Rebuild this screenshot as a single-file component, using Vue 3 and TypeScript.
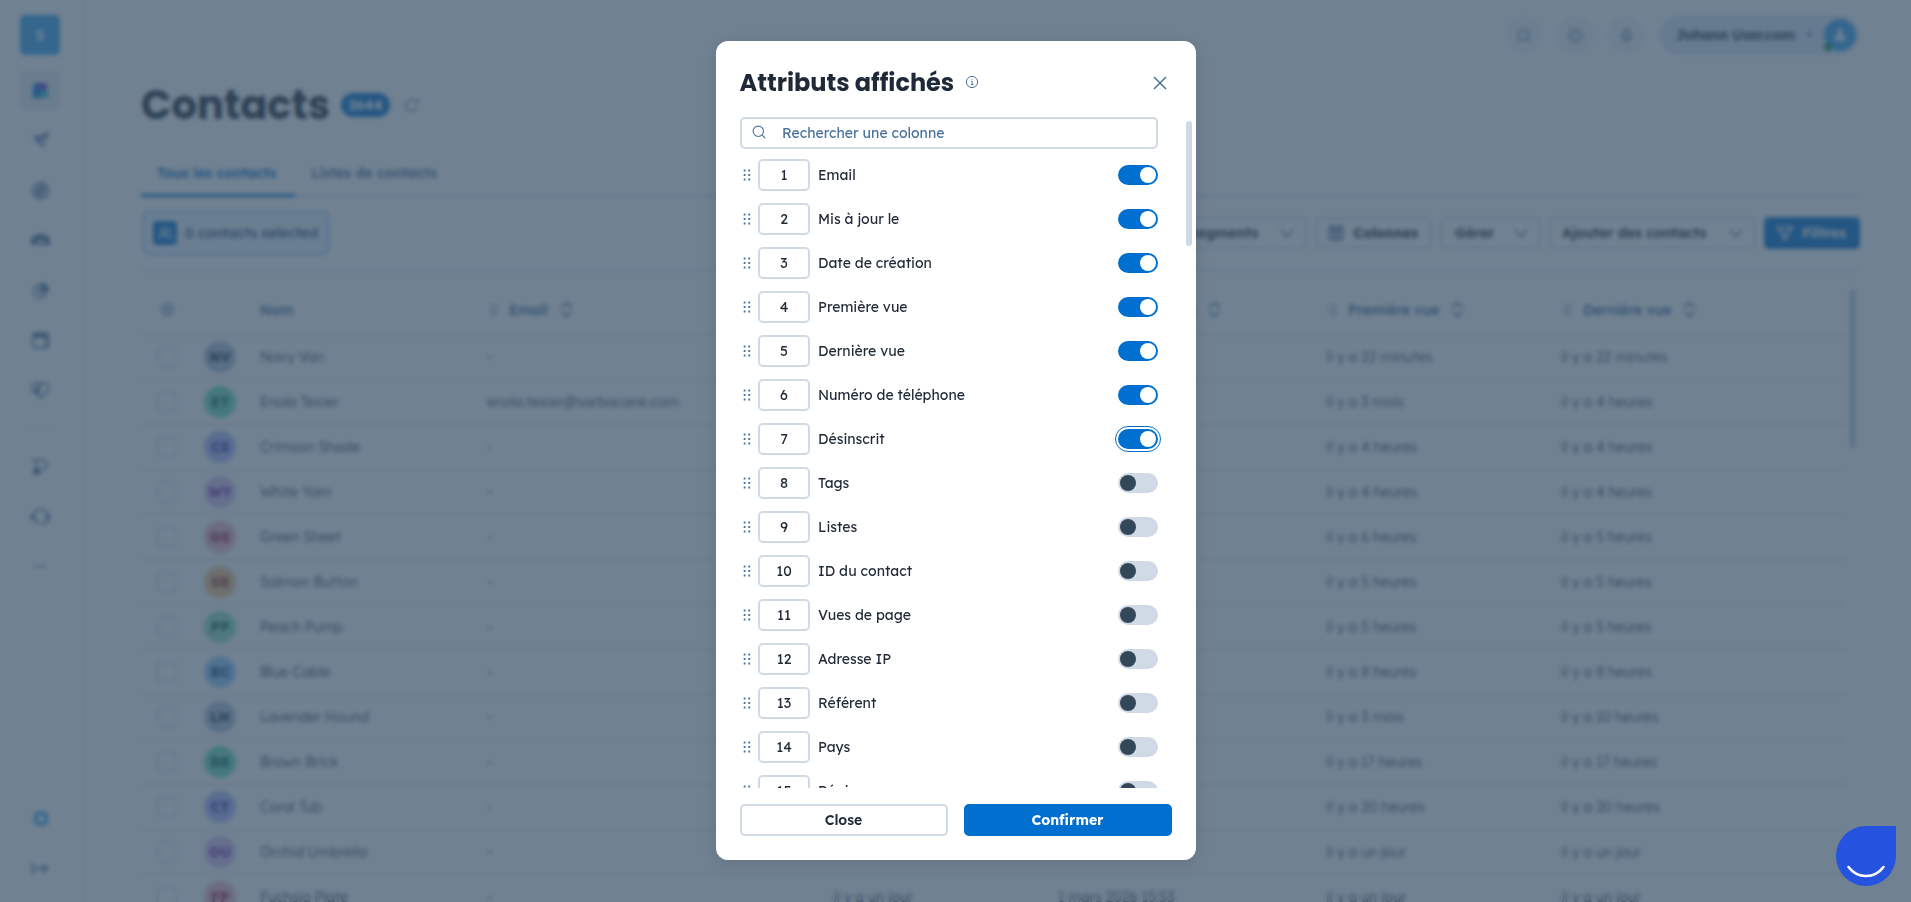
<template>
  <div class="app">
    <aside class="sidebar">
      <div class="workspace">S</div>
      <nav class="nav">
        <a
          v-for="item in mainNav"
          :key="item"
          class="nav-item"
          :class="{ active: item === 'contacts' }"
        >
          <svg
            viewBox="0 0 20 20"
            v-html="icons[item]"
          />
        </a>
      </nav>
      <hr class="nav-divider">
      <nav class="nav">
        <a
          v-for="item in secondaryNav"
          :key="item"
          class="nav-item"
        >
          <svg
            viewBox="0 0 20 20"
            v-html="icons[item]"
          />
        </a>
      </nav>
      <nav class="nav nav-bottom">
        <a
          v-for="item in bottomNav"
          :key="item"
          class="nav-item"
        >
          <svg
            viewBox="0 0 20 20"
            v-html="icons[item]"
          />
        </a>
      </nav>
    </aside>

    <main class="page">
      <header class="topbar">
        <span
          v-for="item in topbarIcons"
          :key="item"
          class="round-button"
        >
          <svg
            viewBox="0 0 20 20"
            v-html="icons[item]"
          />
        </span>
        <div class="account">
          <span class="account-name">Johann User.com</span>
          <span class="account-caret" />
          <span class="account-avatar">
            <svg viewBox="0 0 20 20">
              <circle
                cx="10"
                cy="6"
                r="3.5"
              />
              <path d="M3 17c0-5 3-7 7-7s7 2 7 7z" />
            </svg>
            <i class="online" />
          </span>
        </div>
      </header>

      <div class="page-title">
        <h1>Contacts</h1>
        <span class="count">2644</span>
        <svg
          class="refresh"
          viewBox="0 0 20 20"
          v-html="icons.refresh"
        />
      </div>

      <div class="tabs">
        <span class="tab selected">Tous les contacts</span>
        <span class="tab">Listes de contacts</span>
      </div>

      <div class="toolbar">
        <div class="selection">
          <span class="selection-icon">
            <svg
              viewBox="0 0 20 20"
              v-html="icons.people"
            />
          </span>
          0 contacts selected
        </div>
        <div class="actions">
          <button class="action segments">
            Segments
            <svg
              viewBox="0 0 20 20"
              v-html="icons.chevron"
            />
          </button>
          <button class="action columns">
            <svg
              viewBox="0 0 20 20"
              v-html="icons.columns"
            />
            Colonnes
          </button>
          <button class="action manage">
            Gérer
            <svg
              viewBox="0 0 20 20"
              v-html="icons.chevron"
            />
          </button>
          <button class="action add">
            Ajouter des contacts
            <svg
              viewBox="0 0 20 20"
              v-html="icons.chevron"
            />
          </button>
          <button class="action filters">
            <svg
              viewBox="0 0 20 20"
              v-html="icons.filter"
            />
            Filtres
          </button>
        </div>
      </div>

      <div class="table-area">
        <div class="table">
          <div class="table-row table-head">
            <span class="cell-check">
              <svg
                class="gear"
                viewBox="0 0 20 20"
                v-html="icons.gear"
              />
            </span>
            <span />
            <span>Nom</span>
            <span
              v-for="column in tableColumns"
              :key="column"
              class="column-head"
            >
              <svg
                class="drag"
                viewBox="0 0 8 12"
                v-html="icons.drag"
              />
              {{ column }}
              <svg
                class="sort"
                viewBox="0 0 14 18"
                v-html="icons.sort"
              />
            </span>
          </div>
          <div
            v-for="contact in contacts"
            :key="contact.name"
            class="table-row"
          >
            <span class="cell-check"><i class="checkbox" /></span>
            <span
              class="avatar"
              :class="contact.tone"
            >{{ contact.initials }}</span>
            <span>{{ contact.name }}</span>
            <span>{{ contact.email }}</span>
            <span>{{ contact.updated }}</span>
            <span>{{ contact.created }}</span>
            <span>{{ contact.first }}</span>
            <span>{{ contact.last }}</span>
          </div>
        </div>
        <div class="table-scrollbar" />
      </div>
    </main>
  </div>

  <div class="overlay">
    <section class="modal">
      <header class="modal-header">
        <h2>Attributs affichés</h2>
        <svg
          class="info"
          viewBox="0 0 14 14"
        >
          <circle
            cx="7"
            cy="7"
            r="5.6"
          />
          <path d="M6.3 6.4H7.2V9.6M6 9.6h2.4M6.9 4.2v.9" />
        </svg>
        <svg
          class="close"
          viewBox="0 0 14 14"
        >
          <path d="M1 1l12 12M13 1L1 13" />
        </svg>
      </header>

      <div class="modal-body">
        <div class="modal-content">
          <label class="search">
            <svg viewBox="0 0 14 14">
              <circle
                cx="6.3"
                cy="6.3"
                r="5.2"
              />
              <path d="M10.2 10.2L13 13" />
            </svg>
            <span>Rechercher une colonne</span>
          </label>
          <ul class="attributes">
            <li
              v-for="(attribute, index) in attributes"
              :key="attribute.label"
              class="attribute"
            >
              <svg
                class="handle"
                viewBox="0 0 8 12"
                v-html="icons.drag"
              />
              <span class="position">{{ index + 1 }}</span>
              <span class="label">{{ attribute.label }}</span>
              <button
                class="toggle"
                :class="{ on: attribute.visible, focused: attribute.label === focused }"
                @click="toggle(attribute)"
              />
            </li>
          </ul>
        </div>
        <div class="modal-scrollbar" />
      </div>

      <footer class="modal-footer">
        <button class="secondary">Close</button>
        <button class="primary">Confirmer</button>
      </footer>
    </section>
  </div>

  <div class="messenger">
    <svg viewBox="0 0 60 60">
      <path d="M12.5 41c4.500 6 10.500 9 17.500 9s13-3 17.500-9" />
    </svg>
  </div>
</template>

<script setup lang="ts">
import { ref } from 'vue'

interface Attribute {
  label: string
  visible: boolean
}

const mainNav = ['contacts', 'send', 'target', 'inbox', 'chart', 'calendar', 'heart']
const secondaryNav = ['flow', 'support', 'more']
const bottomNav = ['badge', 'expand']
const topbarIcons = ['search', 'help', 'bell']

const icons: Record<string, string> = {
  contacts: '<path fill="#0a7fe0" stroke="none" d="M2 5l3-3h4v7h3v9H2z"/><path fill="#5b45d6" stroke="none" d="M6 2h8q3 0 3 4v4H9q0-5-3-8z"/><path fill="#2fc8d2" stroke="none" d="M10 11l8-2v9h-8z"/>',
  send: '<path d="M2 5l5 2 11-5-6 14-4-6z"/><path d="M8 10l9-8M5 6l4 7" stroke-width="2.500"/>',
  target: '<circle cx="10" cy="10" r="8.500"/><path d="M4 11l8-8M5 15L15 5M8 17l8-8" stroke-width="2.500"/>',
  inbox: '<path d="M1 8q9-8 18 0v6h-4V9H5v5H1z" fill="currentColor"/><path d="M5 14h10M10 8v6"/>',
  chart: '<path d="M8 4a7 7 0 1 0 8 9H8z"/><path d="M11 2v8h7a8 8 0 0 0-7-8z" fill="currentColor"/>',
  calendar: '<rect x="2" y="2.500" width="16" height="15" rx="2"/><path d="M2 5h16" stroke-width="4"/><path d="M16 7v10"/>',
  heart: '<path d="M10 18L2 10C-1 5 5-1 10 4c5-5 11 1 8 6z"/><path d="M4 10l5-5v5l-3 3z" fill="currentColor"/>',
  flow: '<path d="M2 3h10a5 5 0 0 1 0 10h-2M2 3l4 5v4"/><circle cx="6" cy="15" r="3" fill="currentColor"/>',
  support: '<path d="M3 11V9a7 7 0 0 1 14 0v4q0 5-6 5M4 13q2 4 6 3"/><path d="M2 7.500v6M18 7.500v6" stroke-width="4"/>',
  more: '<path d="M4 10h12" stroke-width="2" stroke-dasharray="2.500 2"/>',
  badge: '<rect x="5" y="4.500" width="11" height="11" rx="3" stroke="#37a6f6" stroke-width="4"/>',
  expand: '<path d="M2 4v12M5 10h12M13 6l4 4-4 4" stroke-width="2"/>',
  search: '<circle cx="9" cy="9" r="7"/><path d="M14 14l4 4"/>',
  help: '<circle cx="10" cy="10" r="8"/><path d="M10 5v6M10 13v2"/>',
  bell: '<path d="M5 14V9a5 5 0 0 1 10 0v5zM8 17h4M10 2v2" stroke-width="2"/>',
  refresh: '<path d="M17 11a7.500 7.500 0 1 1-3-7h4V1M18 4v4"/>',
  people: '<circle cx="8" cy="7" r="3.500"/><path d="M2 17q0-5 6-5t6 5M13 4q4 1 2 6M15 12q4 1 4 5"/>',
  chevron: '<path d="M3 6l7 8 7-8"/>',
  columns: '<path d="M3 3h14v14H3zM8 3v14M12 3v14M3 8h14" stroke-width="2"/>',
  filter: '<path d="M2 4h16l-6 7v5l-4 1v-6z" stroke-width="2"/>',
  gear: '<circle cx="10" cy="10" r="7.500"/><circle cx="10" cy="10" r="2.500"/>',
  drag: [1.5, 6, 10.5].map(y => `<path d="M.7 ${y}h1.800M5.300 ${y}h1.800" stroke-width="1.800"/>`).join(''),
  sort: '<path d="M1.500 7L7 1.500 12.500 7M1.500 11L7 16.500 12.500 11"/>',
}

const tableColumns = ['Email', 'Mis à jour le', 'Date de création', 'Première vue', 'Dernière vue']

const contacts = [
  { initials: 'NV', name: 'Navy Van', email: '-', tone: 'slate', updated: '', created: '', first: 'il y a 22 minutes', last: 'il y a 22 minutes' },
  { initials: 'ET', name: 'Enola Texier', email: 'enola.texier@sarbacane.com', tone: 'teal', updated: '', created: '', first: 'il y a 3 mois', last: 'il y a 4 heures' },
  { initials: 'CS', name: 'Crimson Shade', email: '-', tone: 'indigo', updated: '', created: '', first: 'il y a 4 heures', last: 'il y a 4 heures' },
  { initials: 'WY', name: 'White Yam', email: '-', tone: 'violet', updated: '', created: '', first: 'il y a 4 heures', last: 'il y a 4 heures' },
  { initials: 'GS', name: 'Green Sheet', email: '-', tone: 'rose', updated: '', created: '', first: 'il y a 6 heures', last: 'il y a 5 heures' },
  { initials: 'SB', name: 'Salmon Button', email: '-', tone: 'orange', updated: '', created: '', first: 'il y a 5 heures', last: 'il y a 5 heures' },
  { initials: 'PP', name: 'Peach Pump', email: '-', tone: 'green', updated: '', created: '', first: 'il y a 5 heures', last: 'il y a 5 heures' },
  { initials: 'BC', name: 'Blue Cable', email: '-', tone: 'blue', updated: '', created: '', first: 'il y a 8 heures', last: 'il y a 8 heures' },
  { initials: 'LH', name: 'Lavender Hound', email: '-', tone: 'slate', updated: '', created: '', first: 'il y a 3 mois', last: 'il y a 10 heures' },
  { initials: 'BB', name: 'Brown Brick', email: '-', tone: 'teal', updated: '', created: '', first: 'il y a 17 heures', last: 'il y a 17 heures' },
  { initials: 'CT', name: 'Coral Tub', email: '-', tone: 'indigo', updated: '', created: '', first: 'il y a 20 heures', last: 'il y a 20 heures' },
  { initials: 'OU', name: 'Orchid Umbrella', email: '-', tone: 'violet', updated: '', created: '', first: 'il y a un jour', last: 'il y a un jour' },
  { initials: 'FP', name: 'Fuchsia Plate', email: '-', tone: 'rose', updated: 'il y a un jour', created: '1 mars 2026 15:53', first: 'il y a un jour', last: 'il y a un jour' },
]

const attributes = ref<Attribute[]>([
  { label: 'Email', visible: true },
  { label: 'Mis à jour le', visible: true },
  { label: 'Date de création', visible: true },
  { label: 'Première vue', visible: true },
  { label: 'Dernière vue', visible: true },
  { label: 'Numéro de téléphone', visible: true },
  { label: 'Désinscrit', visible: true },
  { label: 'Tags', visible: false },
  { label: 'Listes', visible: false },
  { label: 'ID du contact', visible: false },
  { label: 'Vues de page', visible: false },
  { label: 'Adresse IP', visible: false },
  { label: 'Référent', visible: false },
  { label: 'Pays', visible: false },
  { label: 'Région', visible: false },
])

// Last toggle used, keeps its focus ring
const focused = ref('Désinscrit')

function toggle(attribute: Attribute) {
  attribute.visible = !attribute.visible
  focused.value = attribute.label
}
</script>

<style>
body {
  overflow: hidden;
  background: #fff;
}
</style>

<style scoped>
.app,
.overlay {
  font-family: Lexend, Inter, sans-serif;
  font-size: 14px;
  color: #1f2937;
}

* {
  box-sizing: border-box;
}

svg {
  flex: none;
  fill: none;
  stroke: currentColor;
  stroke-width: 1.6;
}

button {
  font: inherit;
  color: inherit;
  cursor: pointer;
}

.app {
  display: flex;
  height: 100vh;
  overflow: hidden;
}

.sidebar {
  width: 84px;
  flex: none;
  display: flex;
  flex-direction: column;
  align-items: center;
  padding: 15px 3px 14px 0;
  border-right: 1px solid #dfe6ee;
}

.workspace {
  width: 40px;
  height: 40px;
  margin-bottom: 15px;
  border-radius: 5px;
  background: #37a6f6;
  color: #fff;
  font-weight: 600;
  line-height: 40px;
  text-align: center;
}

.nav {
  display: flex;
  flex-direction: column;
  gap: 10px;
}

.nav-item {
  width: 40px;
  height: 40px;
  display: flex;
  align-items: center;
  justify-content: center;
  border-radius: 5px;
  color: #4d6f9c;
}

.nav-item.active {
  background: #eaf0f7;
}

.nav-item svg {
  width: 19px;
  height: 19px;
}

.nav-divider {
  width: 38px;
  margin: 19px 0 16px;
  border: 0;
  border-top: 1px solid #dfe6ee;
}

.nav-bottom {
  margin-top: auto;
}

.page {
  flex: 1;
  min-width: 0;
  padding: 15px 51px 0 57px;
  overflow: hidden;
}

.topbar {
  height: 40px;
  display: flex;
  justify-content: flex-end;
  align-items: center;
  gap: 13px;
  padding-right: 1px;
}

.round-button {
  width: 38px;
  height: 38px;
  display: flex;
  align-items: center;
  justify-content: center;
  border-radius: 50%;
  background: #f1f5fa;
  color: #4d6f9c;
}

.round-button svg {
  width: 15px;
  height: 15px;
}

.account {
  width: 199px;
  height: 40px;
  display: flex;
  align-items: center;
  margin-left: 2px;
  padding: 0 3px 0 16px;
  border-radius: 20px;
  background: #dde9fb;
}

.account-name {
  font-weight: 600;
  letter-spacing: -0.1px;
}

.account-caret {
  width: 0;
  height: 0;
  margin-left: auto;
  margin-right: 12px;
  border: 3px solid transparent;
  border-top: 4px solid #4d6f9c;
  border-bottom: 0;
}

.account-avatar {
  position: relative;
  width: 32px;
  height: 32px;
  display: flex;
  align-items: center;
  justify-content: center;
  border-radius: 50%;
  background: #37a6f6;
  color: #fff;
}

.account-avatar svg {
  width: 16px;
  height: 16px;
  fill: #fff;
  stroke: none;
}

.online {
  position: absolute;
  left: 0;
  bottom: 0;
  width: 8px;
  height: 8px;
  border-radius: 50%;
  background: #168a4a;
}

.page-title {
  height: 60px;
  display: flex;
  align-items: center;
  margin-top: 20px;
}

.page-title h1 {
  margin: 0;
  font-family: Poppins, Inter, sans-serif;
  font-size: 40px;
  font-weight: 700;
}

.count {
  width: 49px;
  height: 24px;
  margin-left: 11px;
  border-radius: 12px;
  background: #006fd0;
  color: #fff;
  font-weight: 700;
  font-size: 14px;
  line-height: 24px;
  text-align: center;
}

.refresh {
  width: 15px;
  height: 15px;
  margin-left: 14px;
  color: #4d6f9c;
}

.tabs {
  height: 48px;
  display: flex;
  margin-top: 14px;
  border-bottom: 2px solid #d0dae5;
}

.tab {
  height: 48px;
  padding: 0 16px;
  color: #4d6f9c;
  font-weight: 600;
  line-height: 49px;
}

.tab.selected {
  width: 154px;
  border-bottom: 3px solid #006fd0;
  color: #006fd0;
  white-space: nowrap;
}

.toolbar {
  height: 74px;
  display: flex;
  align-items: center;
  justify-content: space-between;
  border-bottom: 2px solid #dfe6ee;
}

.selection {
  width: 186px;
  height: 44px;
  display: flex;
  align-items: center;
  gap: 8px;
  margin-left: 2px;
  padding-left: 8px;
  border: 2px solid #9ecbfa;
  border-radius: 6px;
  background: #edf5ff;
  color: #2d527d;
  font-weight: 500;
  white-space: nowrap;
}

.selection-icon {
  width: 24px;
  height: 24px;
  display: flex;
  align-items: center;
  justify-content: center;
  border-radius: 4px;
  background: #006fd0;
  color: #fff;
}

.selection-icon svg {
  width: 17px;
  height: 17px;
}

.actions {
  display: flex;
  gap: 8px;
}

.action {
  height: 32px;
  display: flex;
  align-items: center;
  justify-content: space-between;
  padding: 0 9px 0 11px;
  border: 2px solid #d0dae5;
  border-radius: 5px;
  background: #fff;
  font-weight: 600;
  white-space: nowrap;
}

.action svg {
  width: 18px;
  height: 18px;
  color: #4d6f9c;
}

.segments {
  width: 131px;
}

.columns {
  width: 117px;
  padding: 0 12px 0 10px;
  font-weight: 700;
}

.manage {
  width: 101px;
  padding-left: 13px;
}

.add {
  width: 207px;
}

.filters {
  width: 96px;
  padding: 0 12px 0 10px;
  border-color: #006fd0;
  background: #006fd0;
  color: #fff;
  font-weight: 700;
}

.filters svg {
  color: #fff;
}

.table-area {
  display: flex;
  gap: 4px;
  padding-top: 18px;
}

.table {
  width: 1705px;
}

.table-row {
  display: grid;
  grid-template-columns: 63px 56px 227px 346px 225px 268px 235px 1fr;
  align-items: center;
  height: 45px;
  border-bottom: 1px solid #d0dae5;
  color: #33475b;
  font-weight: 300;
  white-space: nowrap;
}

.table-head {
  height: 46px;
  padding-bottom: 4px;
  color: #3a679b;
  font-weight: 500;
}

.cell-check {
  padding-left: 16px;
  line-height: 0;
}

.gear {
  width: 15px;
  height: 15px;
  margin-left: 3px;
}

.checkbox {
  width: 20px;
  height: 20px;
  display: inline-block;
  border: 1.5px solid #b2c3d6;
  border-radius: 4px;
}

.column-head {
  display: flex;
  align-items: center;
  padding-left: 3px;
}

.drag {
  width: 8px;
  height: 12px;
  margin-right: 11px;
}

.sort {
  width: 13px;
  height: 17px;
  margin-left: 12px;
}

.avatar {
  width: 32px;
  height: 32px;
  border-radius: 50%;
  font-weight: 700;
  line-height: 32px;
  text-align: center;
}

.slate {
  background: #b2c3dc;
  color: #172c4c;
}

.teal {
  background: #6fe3c0;
  color: #0a655e;
}

.indigo {
  background: #b1bbff;
  color: #3426a6;
}

.violet {
  background: #dcc5f5;
  color: #7124a0;
}

.rose {
  background: #f0b9c9;
  color: #a01646;
}

.orange {
  background: #f5c48e;
  color: #a03d26;
}

.green {
  background: #93e3c0;
  color: #0a655e;
}

.blue {
  background: #93ccff;
  color: #0a4c8a;
}

.table-scrollbar {
  width: 5px;
  height: 159px;
  border-radius: 3px;
  background: #b4c5e4;
}

.overlay {
  position: fixed;
  inset: 0;
  display: flex;
  align-items: flex-start;
  justify-content: center;
  padding-top: 41px;
  background: rgba(51, 75, 99, 0.7);
  backdrop-filter: blur(2px);
}

.modal {
  width: 480px;
  height: 819px;
  display: flex;
  flex-direction: column;
  padding: 24px 0;
  border-radius: 12px;
  background: #fff;
  box-shadow: 0 4px 16px rgba(31, 41, 55, 0.15);
}

.modal-header {
  height: 36px;
  display: flex;
  align-items: center;
  padding: 0 29px 0 24px;
}

.modal-header h2 {
  margin: -2px 0 0;
  font-family: Poppins, Inter, sans-serif;
  font-size: 24px;
  font-weight: 700;
  white-space: nowrap;
}

.info {
  width: 14px;
  height: 14px;
  margin-left: 11px;
  margin-top: -2px;
  color: #4a6f9c;
  stroke-width: 1;
}

.close {
  width: 14px;
  height: 14px;
  margin-left: auto;
  color: #4a7399;
  stroke-width: 1.5;
}

.modal-body {
  flex: 1;
  min-height: 0;
  display: flex;
  justify-content: space-between;
  padding: 16px 4px 0 24px;
}

.modal-content {
  width: 418px;
  clip-path: inset(0 -4px);
}

.search {
  height: 32px;
  display: flex;
  align-items: center;
  padding-left: 10px;
  border: 2px solid #d0dae5;
  border-radius: 5px;
  color: #4a739c;
}

.search svg {
  width: 14px;
  height: 14px;
  margin-bottom: 2px;
  stroke-width: 1.1;
}

.search span {
  margin-left: 16.5px;
}

.attributes {
  height: 629px;
  margin: 10px 0 0;
  padding: 0;
  list-style: none;
}

.attribute {
  height: 32px;
  display: flex;
  align-items: center;
  margin-bottom: 12px;
  padding-left: 3px;
}

.handle {
  width: 8px;
  height: 12px;
  color: #4a7399;
}

.position {
  width: 52px;
  height: 32px;
  margin-left: 7px;
  padding-left: 1px;
  border: 2px solid #d0dae5;
  border-radius: 5px;
  line-height: 28px;
  text-align: center;
}

.label {
  margin-left: 8.5px;
}

.toggle {
  width: 40px;
  height: 20px;
  margin-left: auto;
  padding: 2px;
  border: 0;
  border-radius: 10px;
  background: #d0dae5;
}

.toggle::before {
  content: '';
  display: block;
  width: 16px;
  height: 16px;
  border-radius: 50%;
  background: #33475b;
}

.toggle.on {
  background: #006fd0;
}

.toggle.on::before {
  margin-left: 20px;
  background: #fff;
}

.toggle.focused {
  outline: 1px solid #006fd0;
  outline-offset: 2px;
}

.modal-scrollbar {
  width: 6px;
  height: 125px;
  margin-top: 4px;
  border-radius: 3px;
  background: #d0dae5;
}

.modal-footer {
  display: flex;
  gap: 16px;
  padding: 16px 24px 0;
}

.modal-footer button {
  flex: 1;
  height: 32px;
  padding: 0;
  border: 2px solid #d0dae5;
  border-radius: 5px;
  background: #fff;
  font-weight: 600;
}

.modal-footer .primary {
  border-color: #006fd0;
  background: #006fd0;
  color: #fff;
  font-weight: 700;
}

.messenger {
  position: fixed;
  right: 15px;
  bottom: 16px;
  width: 60px;
  height: 60px;
  border-radius: 30px 1px 30px 30px;
  background: #2553e0;
}

.messenger path {
  stroke: #fff;
  stroke-width: 2.6;
  stroke-linecap: round;
}
</style>
